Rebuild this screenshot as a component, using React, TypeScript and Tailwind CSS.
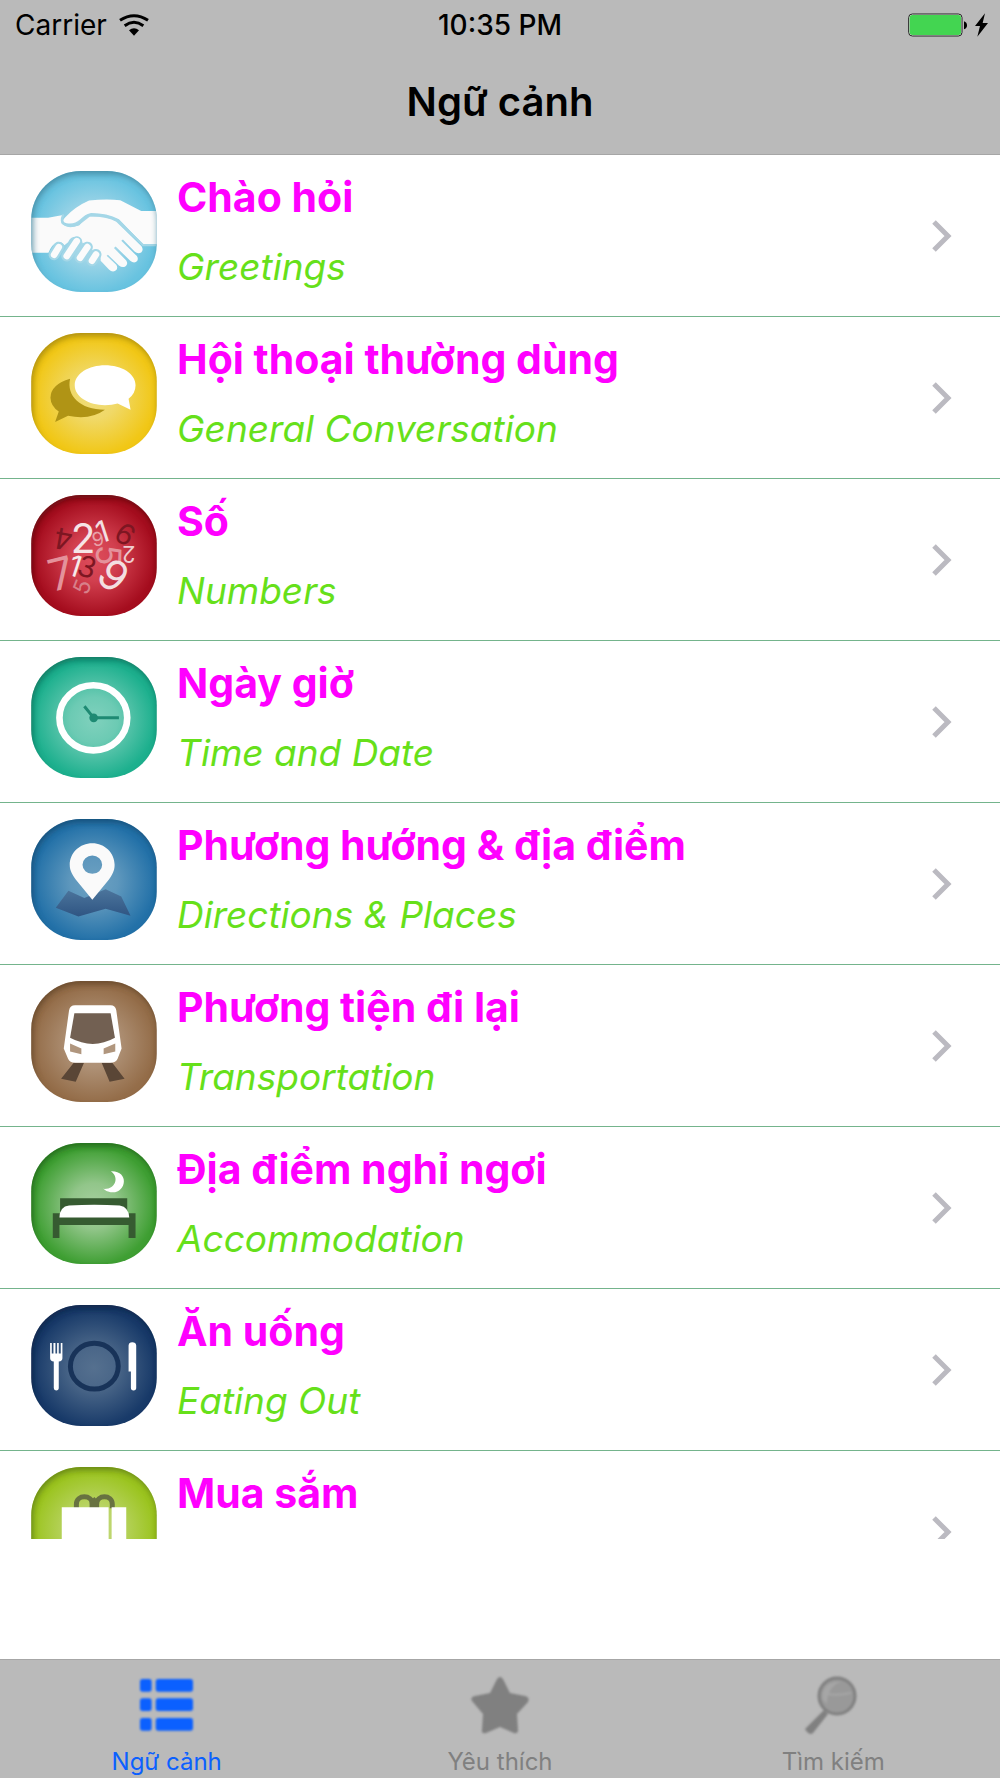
import { useId, type ReactNode } from "react";

type BadgeProps = {
  inner: string;
  outer: string;
  shade: string;
  children: ReactNode;
};

// Glossy rounded tile behind every topic drawing
const Badge = ({ inner, outer, shade, children }: BadgeProps) => {
  const id = useId();
  return (
    <svg
      viewBox="0 0 378 364"
      className="h-[121px] w-[126px] shrink-0"
      aria-hidden="true"
    >
      <defs>
        <radialGradient id={`${id}-fill`} cx="0.5" cy="0.52" r="0.54">
          <stop offset="0" stopColor={inner} />
          <stop offset="0.35" stopColor={inner} stopOpacity="0.8" />
          <stop offset="0.9" stopColor={inner} stopOpacity="0" />
        </radialGradient>
        <clipPath id={`${id}-clip`}>
          <rect width="378" height="364" rx="150" ry="146" />
        </clipPath>
        <filter id={`${id}-soft`} x="-20%" y="-20%" width="140%" height="140%">
          <feGaussianBlur stdDeviation="9" />
        </filter>
      </defs>
      <g clipPath={`url(#${id}-clip)`}>
        <rect width="378" height="364" fill={outer} />
        <rect width="378" height="364" fill={`url(#${id}-fill)`} />
        {children}
        <rect
          x="-8"
          y="-4"
          width="402"
          height="396"
          rx="158"
          ry="156"
          fill="none"
          stroke={shade}
          strokeWidth="26"
          opacity="0.85"
          filter={`url(#${id}-soft)`}
        />
      </g>
    </svg>
  );
};

const Handshake = () => (
  <Badge inner="#b5dcea" outer="#68c3e0" shade="#3f8199">
    <g transform="translate(-94 -64)">
      <path
        fill="#fafafa"
        d="M94 205H145L190 196Q183 212 188 222Q200 238 235 229Q255 214 270 202Q320 200 350 217L426 290Q433 302 425 309Q415 315 405 306L370 270L365 274L412 320Q419 332 409 338Q401 342 392 334L348 291L343 296L380 333Q387 345 377 351Q368 356 358 348L325 316L321 319L350 346Q357 358 347 364Q338 370 328 360L303 334Q304 308 288 303L278 303Q276 286 262 281L248 280Q246 262 228 262Q212 262 205 278L194 287Q186 276 172 278Q156 284 146 310H94Z"
      />
      <path
        fill="#fbfbfb"
        d="M475 184H425L362 152Q320 147 268 153Q225 172 196 204Q183 217 200 221Q225 225 240 211Q258 192 275 190Q322 190 358 209L432 286H475Z"
      />
      <g fill="none" strokeLinecap="round">
        <g stroke="#a4d7e7" strokeWidth="33">
          <path d="M177 293L163 316M231 277L201 320M263 293L241 325M289 315L277 334" />
        </g>
        <path
          stroke="#a4d7e7"
          strokeWidth="7"
          d="M190 197Q183 214 190 222Q205 236 237 224Q258 196 275 195Q320 195 354 213L430 287H471"
        />
        <g stroke="#fbfbfb" strokeWidth="20">
          <path d="M177 293L163 316M231 275L201 320M263 293L241 325M289 315L277 334" />
        </g>
      </g>
    </g>
  </Badge>
);

const Bubbles = () => (
  <Badge inner="#f0dd7c" outer="#f1c716" shade="#9a7f0e">
    <g transform="translate(-94 -549)">
      <path
        fill="#b09415"
        d="M211 687Q153 704 152 744Q153 770 177 785L166 817L205 798Q272 812 316 780C240 780 200 738 211 687Z"
      />
      <path
        fill="#fff"
        d="M316 646C268 646 225 671 225 706C225 741 268 766 316 766Q337 766 354 761L393 780L387 747Q408 730 408 706C408 671 366 646 316 646Z"
      />
    </g>
  </Badge>
);

const digits = [
  { n: "4", x: 191, y: 192, size: 88, turn: 190, fill: "#7d1622" },
  { n: "6", x: 377, y: 178, size: 86, turn: 32, fill: "#7d1622" },
  { n: "3", x: 262, y: 276, size: 88, turn: 18, fill: "#7d1622" },
  { n: "7", x: 184, y: 296, size: 132, turn: -14, fill: "#e4929b" },
  { n: "5", x: 327, y: 241, size: 104, turn: 92, fill: "#e4929b" },
  { n: "5", x: 247, y: 336, size: 68, turn: -68, fill: "#d8808a" },
  { n: "9", x: 295, y: 192, size: 58, turn: -12, fill: "#e8a2a9" },
  { n: "2", x: 388, y: 238, size: 68, turn: 180, fill: "#eecdd0" },
  { n: "1", x: 226, y: 273, size: 88, turn: 18, fill: "#f6e9ea" },
  { n: "1", x: 308, y: 170, size: 90, turn: -18, fill: "#f3dfe1" },
  { n: "2", x: 250, y: 192, size: 122, turn: 0, fill: "#f6e4e6" },
  { n: "9", x: 342, y: 302, size: 126, turn: 38, fill: "#f3dfe1" },
];

const Numbers = () => (
  <Badge inner="#dd4c5b" outer="#a50d1e" shade="#5a0811">
    <g
      transform="translate(-94 -60)"
      className="font-['Inter','Liberation_Sans',sans-serif]"
      textAnchor="middle"
    >
      {digits.map((d, key) => (
        <text
          key={key}
          transform={`translate(${d.x} ${d.y}) rotate(${d.turn})`}
          y={d.size * 0.36}
          fontSize={d.size}
          fill={d.fill}
        >
          {d.n}
        </text>
      ))}
    </g>
  </Badge>
);

const Clock = () => (
  <Badge inner="#80d1bd" outer="#1db08e" shade="#0e6b56">
    <g transform="translate(-94 -546)">
      <ellipse
        cx="281"
        cy="729"
        rx="102"
        ry="98"
        fill="none"
        stroke="#fff"
        strokeWidth="20"
      />
      <circle cx="282" cy="729" r="13" fill="#1e8a73" />
      <path
        d="M254 694L282 729H358"
        fill="none"
        stroke="#1e8a73"
        strokeWidth="9"
      />
    </g>
  </Badge>
);

const Pin = () => (
  <Badge inner="#6da1c2" outer="#2371a8" shade="#164a70">
    <defs>
      <linearGradient id="map-fold" x1="0" y1="0" x2="0" y2="1">
        <stop offset="0" stopColor="#4c759c" />
        <stop offset="1" stopColor="#2f5583" />
      </linearGradient>
    </defs>
    <g transform="translate(-94 -56)">
      <path
        fill="url(#map-fold)"
        d="M206 272L168 323L236 349L318 326L393 347L365 289L318 267L254 294Z"
      />
      <path
        fill="#fafafa"
        fillRule="evenodd"
        d="M278 129C240 129 210 158 210 194C210 212 218 224 228 238L278 299L328 238C338 224 345 212 345 194C345 158 315 129 278 129ZM278 166A29 27 0 1 1 278 221A29 27 0 1 1 278 166Z"
      />
    </g>
  </Badge>
);

const Train = () => (
  <Badge inner="#b59a81" outer="#946d49" shade="#5f4328">
    <g transform="translate(-94 -542)">
      <path fill="#5a4636" d="M222 788L184 836L228 845L253 788ZM306 788L330 845L375 836L338 788Z" />
      <path
        fill="#fff"
        d="M226 615H333Q347 615 350 630L366 745L354 776Q349 788 332 788H226Q210 788 205 776L192 745L208 630Q211 615 226 615Z"
      />
      <path fill="#726052" d="M224 639H333L346 713Q280 750 211 713Z" />
      <path fill="#b0967e" d="M211 730L245 745V762L211 754ZM347 730L312 745V762L347 754Z" />
    </g>
  </Badge>
);

const Bed = () => (
  <Badge inner="#a6cf9f" outer="#3f9f33" shade="#1f5f18">
    <g transform="translate(-94 -67)">
      <path
        fill="#fff"
        d="M334 152C392 150 380 222 333 215Q318 213 311 205C348 208 360 170 334 152Z"
      />
      <path
        fill="#365b31"
        d="M181 233H383V278H408V353H387V314H179V353H159V278H181Z"
      />
      <path fill="#fff" d="M179 291Q180 258 208 255Q284 250 360 255Q388 260 389 291Z" />
    </g>
  </Badge>
);

const Dinner = () => (
  <Badge inner="#55708f" outer="#183a69" shade="#0d2344">
    <g transform="translate(-94 -552)">
      <ellipse
        cx="284"
        cy="736"
        rx="72"
        ry="69"
        fill="none"
        stroke="#183359"
        strokeWidth="15"
      />
      <path
        fill="#fff"
        d="M151 666H156V698H161V666H167V698H172V666H177V698H183V666H188V712Q188 721 177 722V802Q177 809 169 809Q162 809 162 802V722Q151 721 151 712Z"
      />
      <path
        fill="#fff"
        d="M387 752V674Q388 664 398 664Q409 664 410 674V802Q410 809 402 809Q394 809 394 802V752Z"
      />
    </g>
  </Badge>
);

const Bag = () => (
  <Badge inner="#c3d97b" outer="#9bc41f" shade="#5c7812">
    <g transform="translate(-94 -78)">
      <path
        d="M230 202V190C230 160 278 160 278 190V202M291 202V190C291 160 338 160 338 190V202"
        fill="none"
        stroke="#687241"
        strokeWidth="15"
      />
      <path d="M270 202V182L284 168L298 182L286 202Z" fill="#687241" />
      <path fill="#fff" d="M186 199H327V390H186ZM336 199H380V390H336Z" />
    </g>
  </Badge>
);

const topics = [
  { title: "Chào hỏi", subtitle: "Greetings", Icon: Handshake },
  { title: "Hội thoại thường dùng", subtitle: "General Conversation", Icon: Bubbles },
  { title: "Số", subtitle: "Numbers", Icon: Numbers },
  { title: "Ngày giờ", subtitle: "Time and Date", Icon: Clock },
  { title: "Phương hướng & địa điểm", subtitle: "Directions & Places", Icon: Pin },
  { title: "Phương tiện đi lại", subtitle: "Transportation", Icon: Train },
  { title: "Địa điểm nghỉ ngơi", subtitle: "Accommodation", Icon: Bed },
  { title: "Ăn uống", subtitle: "Eating Out", Icon: Dinner },
  { title: "Mua sắm", subtitle: "", Icon: Bag },
];

const StatusBar = () => (
  <div className="grid h-[50px] grid-cols-3 items-center px-3 text-[28px] leading-8">
    <div className="flex items-center gap-3 pl-[3px]">
      <span>Carrier</span>
      <svg viewBox="0 0 90 64" className="h-[22px] w-[30px]" aria-label="Wi-Fi">
        <g fill="none" stroke="#000" strokeWidth="9">
          <path d="M3 18Q45 -10 87 18" />
          <path d="M17 34Q45 14 73 34" />
        </g>
        <path d="M30 48Q45 36 60 48L45 64Z" />
      </svg>
    </div>
    <span className="text-center font-medium">10:35 PM</span>
    <div className="flex items-center justify-end">
      <svg viewBox="0 0 240 72" className="h-6 w-20" aria-label="Battery charging">
        <rect x="2" y="3" width="160" height="66" rx="11" fill="#ddd" stroke="#222" strokeWidth="3" />
        <rect x="5" y="6" width="154" height="60" rx="8" fill="#43d551" />
        <path d="M168 25Q177 28 177 37Q177 46 168 49Z" />
        <path d="M231 1L201 39H216L208 71L240 30H224Z" />
      </svg>
    </div>
  </div>
);

const ListIcon = () => (
  <svg viewBox="0 0 159 159" className="h-[53px] w-[53px] blur-[1px]" aria-hidden="true">
    <g fill="currentColor">
      <rect y="0" width="35" height="38" rx="8" />
      <rect x="47" y="0" width="112" height="38" rx="8" />
      <rect y="58" width="35" height="38" rx="8" />
      <rect x="47" y="58" width="112" height="38" rx="8" />
      <rect y="117" width="35" height="38" rx="8" />
      <rect x="47" y="117" width="112" height="38" rx="8" />
    </g>
  </svg>
);

const StarIcon = () => (
  <svg viewBox="0 0 58 57" className="h-[57px] w-[58px] blur-[1px]" aria-hidden="true">
    <path
      fill="currentColor"
      d="M29 0Q31 0 33 4L39 16L54 19Q59 20 57 25L46 37L47 53Q47 57 43 56L29 50L15 56Q10 57 11 53L12 37L1 24Q-1 20 4 19L19 16L25 4Q27 0 29 0Z"
    />
  </svg>
);

const SearchIcon = () => (
  <svg viewBox="0 0 57 58" className="h-[58px] w-[57px] blur-[1px]" aria-hidden="true">
    <path d="M19 34L23 38L8 57Q4 60 0 53Z" fill="currentColor" />
    <ellipse cx="32" cy="20" rx="18" ry="18" fill="#999" stroke="currentColor" strokeWidth="3" />
    <path d="M18 24C15 10 27 4 36 6C28 8 22 16 22 28ZM22 17Q32 19 46 16V18Q32 21 22 19Z" fill="#a6a6a6" />
  </svg>
);

const tabs = [
  { label: "Ngữ cảnh", Icon: ListIcon, active: true },
  { label: "Yêu thích", Icon: StarIcon, active: false },
  { label: "Tìm kiếm", Icon: SearchIcon, active: false },
];

const App = () => {
  return (
    <div className="flex h-screen flex-col bg-white font-['Inter','Liberation_Sans',sans-serif] text-black">
      <header className="shrink-0 border-b border-[#a6a6a6] bg-[#bababa]">
        <StatusBar />
        <h1 className="pt-7 pb-7 text-center text-[40px] leading-12 font-semibold">
          Ngữ cảnh
        </h1>
      </header>
      <main className="flex min-h-0 flex-1 flex-col pb-[120px]">
        <ul className="min-h-0 flex-1 overflow-hidden">
          {topics.map(({ title, subtitle, Icon }) => (
            <li key={title} className="border-b border-[#74b48c]">
              <a href="#" className="flex items-center gap-5 pr-12 pl-[31px]">
                <div className="pt-4 pb-6">
                  <Icon />
                </div>
                <div className="min-w-0 flex-1 self-start pt-[18px]">
                  <div className="text-[41px] leading-12 font-bold text-[#ff00ff]">
                    {title}
                  </div>
                  {subtitle && (
                    <div className="mt-[22px] text-[37px] leading-12 text-[#66e01a] italic">
                      {subtitle}
                    </div>
                  )}
                </div>
                <svg viewBox="0 0 20 32" className="h-8 w-5" aria-hidden="true">
                  <path
                    d="M2 2L16 16L2 30"
                    fill="none"
                    stroke="#bbbac1"
                    strokeWidth="5"
                  />
                </svg>
              </a>
            </li>
          ))}
        </ul>
      </main>
      <nav className="grid h-[119px] shrink-0 grid-cols-3 border-t border-[#a6a6a6] bg-[#bababa]">
        {tabs.map(({ label, Icon, active }) => (
          <button
            key={label}
            type="button"
            className={
              active
                ? "flex flex-col items-center pt-[14px] text-[#0b60ff]"
                : "flex flex-col items-center pt-[14px] text-[#808080]"
            }
          >
            <div className="flex h-[62px] items-center">
              <Icon />
            </div>
            <span className="mt-[10px] text-[24px] leading-8">{label}</span>
          </button>
        ))}
      </nav>
    </div>
  );
};

export default App;
